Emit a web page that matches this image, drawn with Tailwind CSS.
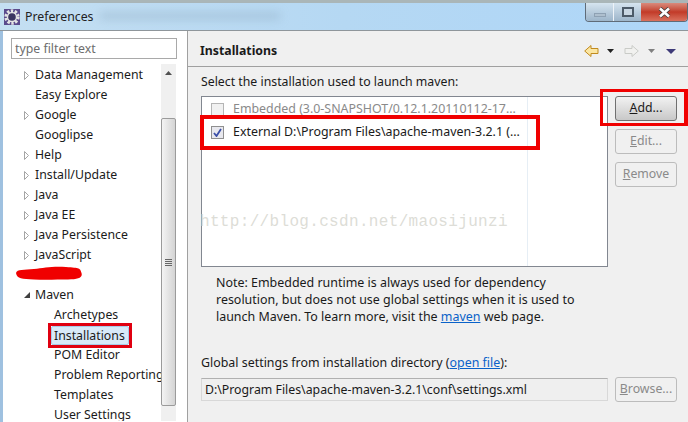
<!DOCTYPE html>
<html lang="en">
<head>
<meta charset="UTF-8">
<title>Preferences</title>
<script src="https://cdn.jsdelivr.net/npm/@tailwindcss/browser@4"></script>
</head>
<body class="w-[688px] h-[422px] overflow-hidden bg-[#f0f0f0] font-['Noto_Sans',sans-serif] text-[12.3px] text-[#1a1a1a]">
<div class="relative w-[688px] h-[422px] overflow-hidden">

  <!-- title bar -->
  <div class="relative h-[31px] flex items-start bg-gradient-to-r from-[#c4dff2] via-[#b5d8f3] to-[#aed6f8] border-t-[3px] border-b border-t-[#aab6b8] border-b-[#8f969b]">
    <div class="absolute left-[100px] top-[9px] w-[180px] h-[8px] bg-[#8fa9c0]/40 blur-[4px]"></div>
    <svg class="relative ml-1 mt-[6px] w-4 h-4" viewBox="0 0 16 16">
      <rect width="16" height="16" fill="#5a4a8c"/>
      <circle cx="8" cy="8" r="6.2" fill="none" stroke="#e4e4e4" stroke-width="3" stroke-dasharray="2.4 1.5"/>
      <circle cx="8" cy="8" r="5.2" fill="#e4e4e4"/>
      <circle cx="8" cy="8" r="3.8" fill="#3b3560"/>
    </svg>
    <span class="relative ml-[5px] mt-[5px] leading-[18px] text-[#222]">Preferences</span>
    <div class="relative ml-auto flex h-[19px] border border-t-0 border-[#5f6b78] rounded-b-[4px] overflow-hidden">
      <div class="w-[28px] bg-gradient-to-b from-[#d5e4ef] to-[#9db5ca] border-r border-[#eef3f8] flex items-end justify-center pb-[4px]">
        <div class="w-[12px] h-[4px] bg-[#aebfce] border border-[#8ea1b3]"></div>
      </div>
      <div class="w-[27px] bg-gradient-to-b from-[#d5e4ef] to-[#9db5ca] flex items-center justify-center">
        <div class="w-[12px] h-[10px] border-2 border-[#4c5a68] bg-[#c8d6e2]"></div>
      </div>
      <div class="w-[46px] bg-gradient-to-b from-[#d88a7c] via-[#c23a28] to-[#d9705d] flex items-center justify-center">
        <svg class="w-[13px] h-[11px]" viewBox="0 0 13 11"><path d="M2 1.5l9 8M11 1.5l-9 8" stroke="#3d3d3d" stroke-width="4.2"/><path d="M2 1.5l9 8M11 1.5l-9 8" stroke="#fff" stroke-width="2.6"/></svg>
      </div>
    </div>
  </div>

  <div class="flex h-[391px] border-l-[3px] border-l-[#9fc1e0]">
    <!-- left panel -->
    <div class="w-[185px] shrink-0 bg-white border-r border-[#a0a0a0] pt-[7px] pl-2 pr-[10px] flex flex-col">
      <input class="h-[21px] w-[166px] shrink-0 border border-[#a9a9a9] bg-white px-[3px] text-[12.3px] placeholder:text-[#6d6d6d] outline-none" placeholder="type filter text">
      <div class="flex mt-[5px] h-[357px]">
        <ul class="w-[150px] overflow-hidden pt-[1px] leading-[20px] whitespace-nowrap">
          <li class="flex items-center h-5"><svg class="ml-[13px] w-[5px] h-[9px]" viewBox="0 0 5 9"><path d="M.5.5l4 4-4 4z" fill="#fff" stroke="#a5a5a5"/></svg><span class="ml-[6px]">Data Management</span></li>
          <li class="flex items-center h-5 pl-6">Easy Explore</li>
          <li class="flex items-center h-5"><svg class="ml-[13px] w-[5px] h-[9px]" viewBox="0 0 5 9"><path d="M.5.5l4 4-4 4z" fill="#fff" stroke="#a5a5a5"/></svg><span class="ml-[6px]">Google</span></li>
          <li class="flex items-center h-5 pl-6">Googlipse</li>
          <li class="flex items-center h-5"><svg class="ml-[13px] w-[5px] h-[9px]" viewBox="0 0 5 9"><path d="M.5.5l4 4-4 4z" fill="#fff" stroke="#a5a5a5"/></svg><span class="ml-[6px]">Help</span></li>
          <li class="flex items-center h-5"><svg class="ml-[13px] w-[5px] h-[9px]" viewBox="0 0 5 9"><path d="M.5.5l4 4-4 4z" fill="#fff" stroke="#a5a5a5"/></svg><span class="ml-[6px]">Install/Update</span></li>
          <li class="flex items-center h-5"><svg class="ml-[13px] w-[5px] h-[9px]" viewBox="0 0 5 9"><path d="M.5.5l4 4-4 4z" fill="#fff" stroke="#a5a5a5"/></svg><span class="ml-[6px]">Java</span></li>
          <li class="flex items-center h-5"><svg class="ml-[13px] w-[5px] h-[9px]" viewBox="0 0 5 9"><path d="M.5.5l4 4-4 4z" fill="#fff" stroke="#a5a5a5"/></svg><span class="ml-[6px]">Java EE</span></li>
          <li class="flex items-center h-5"><svg class="ml-[13px] w-[5px] h-[9px]" viewBox="0 0 5 9"><path d="M.5.5l4 4-4 4z" fill="#fff" stroke="#a5a5a5"/></svg><span class="ml-[6px]">Java Persistence</span></li>
          <li class="flex items-center h-5"><svg class="ml-[13px] w-[5px] h-[9px]" viewBox="0 0 5 9"><path d="M.5.5l4 4-4 4z" fill="#fff" stroke="#a5a5a5"/></svg><span class="ml-[6px]">JavaScript</span></li>
          <li class="h-5"></li>
          <li class="flex items-center h-5"><svg class="ml-[13px] w-[6px] h-[6px]" viewBox="0 0 6 6"><path d="M6 0v6H0z" fill="#404040"/></svg><span class="ml-[5px]">Maven</span></li>
          <li class="flex items-center h-5 pl-[43px]">Archetypes</li>
          <li class="flex items-center h-5 pl-[43px]"><span class="-ml-[3px] pl-[2px] pr-[3px] h-[19px] bg-[#d8e9f8] border border-[#a8cbe8] rounded-[2px] leading-[17px]">Installations</span></li>
          <li class="flex items-center h-5 pl-[43px]">POM Editor</li>
          <li class="flex items-center h-5 pl-[43px]">Problem Reporting</li>
          <li class="flex items-center h-5 pl-[43px]">Templates</li>
          <li class="flex items-center h-5 pl-[43px]">User Settings</li>
        </ul>
        <!-- tree scrollbar -->
        <div class="w-[15px] bg-[#f0f0f0] flex flex-col items-center">
          <svg class="mt-[7px] w-[7px] h-[4px]" viewBox="0 0 7 4"><path d="M3.5 0L7 4H0z" fill="#505050"/></svg>
          <div class="mt-[43px] w-[15px] h-[288px] bg-gradient-to-r from-[#f4f4f4] to-[#d4d4d4] border border-[#9b9b9b] rounded-[2px] flex flex-col items-center justify-center gap-[1px]">
            <div class="w-[7px] h-px bg-[#666]"></div>
            <div class="w-[7px] h-px bg-[#666]"></div>
            <div class="w-[7px] h-px bg-[#666]"></div>
            <div class="w-[7px] h-px bg-[#666]"></div>
          </div>
        </div>
      </div>
    </div>

    <!-- right panel -->
    <div class="flex-1 flex flex-col bg-[#f0f0f0]">
      <div class="h-[36px] shrink-0 border-b border-[#a0a0a0] flex items-center pl-3 pt-[5px]">
        <span class="font-bold">Installations</span>
        <div class="ml-auto mr-3 flex items-center">
          <svg class="w-[15px] h-[12px]" viewBox="0 0 15 12"><path d="M7 .5L.7 6 7 11.5V8.5h7v-5H7z" fill="#fbe6a2" stroke="#c08a1e"/></svg>
          <svg class="ml-[8px] w-[7px] h-[4px]" viewBox="0 0 7 4"><path d="M0 0h7L3.5 4z" fill="#222"/></svg>
          <svg class="ml-[10px] w-[15px] h-[12px]" viewBox="0 0 15 12"><path d="M8 .5L14.3 6 8 11.5V8.5H1v-5h7z" fill="#f1f1ef" stroke="#c9cbc7"/></svg>
          <svg class="ml-[9px] w-[7px] h-[4px]" viewBox="0 0 7 4"><path d="M0 0h7L3.5 4z" fill="#808080"/></svg>
          <svg class="ml-[11px] w-[10px] h-[5px]" viewBox="0 0 10 5"><path d="M0 0h10L5 5z" fill="#3e3a78"/></svg>
        </div>
      </div>

      <div class="pl-[13px] pt-[6px] leading-[18px]">Select the installation used to launch maven:</div>

      <div class="flex ml-[13px] mt-[5px]">
        <div class="relative w-[407px] h-[171px] bg-white border border-[#828790] pt-[1px] text-[12.4px]">
          <div class="absolute left-[325px] top-0 bottom-0 w-px bg-[#e6eef5]"></div>
          <div class="flex items-center h-[22px] pl-[9px] text-[#8a8a8a]">
            <span class="w-[13px] h-[13px] border border-[#b5b5b5] bg-[#f1f1f1]"></span>
            <span class="ml-[9px] whitespace-nowrap">Embedded (3.0-SNAPSHOT/0.12.1.20110112-17...</span>
          </div>
          <div class="flex items-center h-[22px] mt-px pl-[9px]">
            <span class="w-[13px] h-[13px] border border-[#8f8f8f] bg-[#e8e8ee] flex items-center justify-center">
              <svg class="w-[9px] h-[9px]" viewBox="0 0 9 9"><path d="M1 5l2.5 3L8 1" fill="none" stroke="#3b4fa8" stroke-width="1.8"/></svg>
            </span>
            <span class="ml-[9px] whitespace-nowrap">External D:\Program Files\apache-maven-3.2.1 (...</span>
          </div>
        </div>
        <div class="ml-[7px] flex flex-col gap-2">
          <button class="w-[62px] h-[25px] rounded-[3px] border border-[#707070] bg-gradient-to-b from-[#f2f2f2] to-[#c8c8c8]"><span class="underline">A</span>dd...</button>
          <button class="w-[62px] h-[25px] rounded-[3px] border border-[#bcbcbc] bg-[#f0f0f0] text-[#8a8a8a]"><span class="underline">E</span>dit...</button>
          <button class="w-[62px] h-[25px] rounded-[3px] border border-[#bcbcbc] bg-[#f0f0f0] text-[#8a8a8a]"><span class="underline">R</span>emove</button>
        </div>
      </div>

      <p class="ml-[28px] mt-[7px] w-[385px] text-[12.45px] leading-[17px]">Note: Embedded runtime is always used for dependency resolution, but does not use global settings when it is used to launch Maven. To learn more, visit the <a class="text-[#0a62c9] underline">maven</a> web page.</p>

      <div class="ml-[13px] mt-[29px] text-[12.42px] leading-[18px]">Global settings from installation directory (<a class="text-[#0a62c9] underline">open file</a>):</div>

      <div class="flex items-center ml-[13px] mt-[5px]">
        <div class="w-[407px] h-[23px] border border-[#d8d8d8] border-t-[#b0b0b0] bg-[#efefef] px-[3px] leading-[21px]">D:\Program Files\apache-maven-3.2.1\conf\settings.xml</div>
        <button class="ml-[7px] w-[62px] h-[25px] rounded-[3px] border border-[#bcbcbc] bg-[#f0f0f0] text-[#8a8a8a]"><span class="underline">B</span>rowse...</button>
      </div>
    </div>
  </div>

  <!-- annotations drawn over the screenshot -->
  <div class="absolute left-[200px] top-[115px] w-[340px] h-[35px] border-[4px] border-[#f00000]"></div>
  <div class="absolute left-[600px] top-[89px] w-[88px] h-[37px] border-[3px] border-r-[4px] border-[#f00000]"></div>
  <div class="absolute left-[48px] top-[323px] w-[84px] h-[25px] border-[3px] border-[#e00010]"></div>
  <svg class="absolute left-[16px] top-[266px] w-[66px] h-[14px]" viewBox="0 0 66 14"><path d="M0 7C1 3 8 4 18 3S36 0 50 1 64 2 65.500 7 62 13.500 52 13.500 30 14 18 13.500 1 13 0 7z" fill="#f00000"/></svg>
  <div class="absolute left-[200px] top-[210px] font-['Liberation_Mono',monospace] text-[16px] leading-[24px] tracking-[0.33px] text-[#d4d4cc]/80 whitespace-nowrap">http://blog.csdn.net/maosijunzi</div>
</div>
</body>
</html>
